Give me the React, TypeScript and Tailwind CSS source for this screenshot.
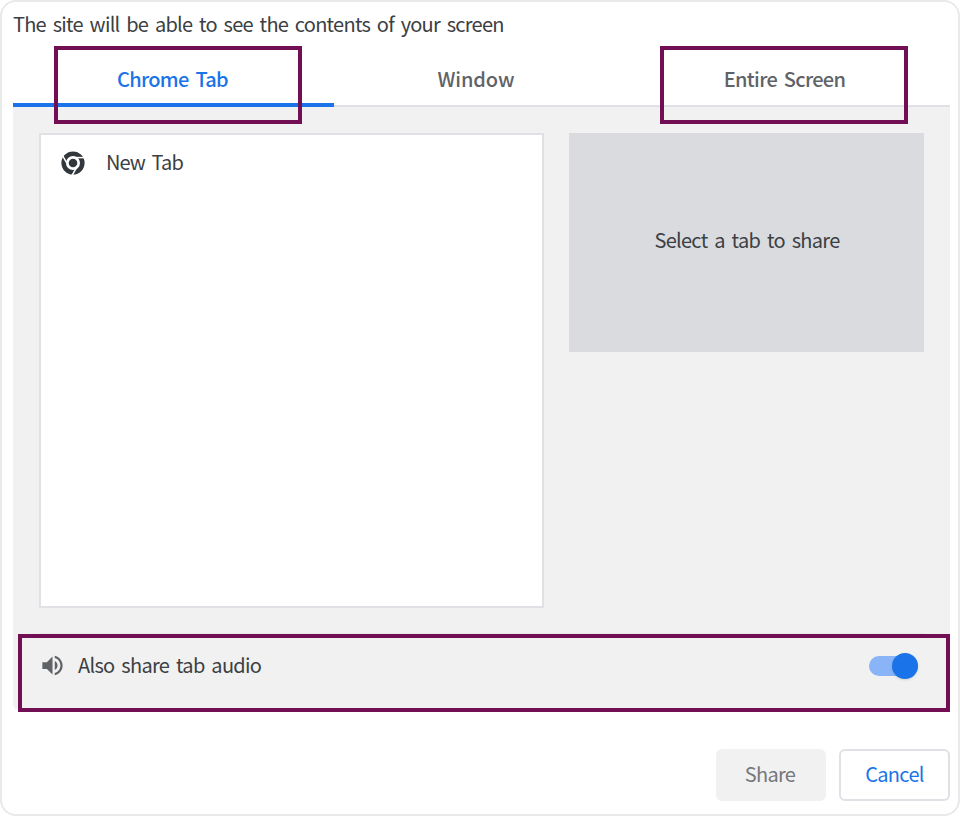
import React from "react";

function ChromeIcon() {
  return (
    <svg viewBox="0 0 24 24" className="h-6 w-6 shrink-0">
      <circle cx="12" cy="12" r="9.3" fill="none" stroke="#32373b" strokeWidth="4.6" />
      <circle cx="12" cy="12" r="6.2" fill="#fff" />
      <circle cx="12" cy="12" r="4.3" fill="#32373b" />
      <g stroke="#fff" strokeWidth="1.5">
        <path d="M12 6.6H23" />
        <path d="M12 6.6H23" transform="rotate(120 12 12)" />
        <path d="M12 6.6H23" transform="rotate(240 12 12)" />
      </g>
    </svg>
  );
}

function SpeakerIcon() {
  return (
    <svg viewBox="0 0 24 24" className="h-[27px] w-[27px] shrink-0" fill="#5f6368">
      <path d="M3 9v6h4l5 5V4L7 9H3zm13.5 3c0-1.77-1.02-3.29-2.5-4.03v8.05c1.48-.73 2.5-2.25 2.5-4.02zM14 3.23v2.06c2.89.86 5 3.54 5 6.71s-2.11 5.85-5 6.71v2.06c4.01-.91 7-4.49 7-8.77s-2.99-7.86-7-8.77z" />
    </svg>
  );
}

function Highlight({ className }: { className: string }) {
  return <div className={`pointer-events-none absolute border-4 border-[#720e54] ${className}`} />;
}

export default function App() {
  return (
    <div className="relative flex h-[816px] w-[960px] flex-col rounded-2xl border-2 border-[#e9e9e9] bg-white pr-2 pl-[11px] font-['Noto_Sans_CJK_KR',sans-serif] text-[20px] leading-[30px] tracking-[-0.7px] text-[#3c4043] [word-spacing:3px]">
      <h1 className="mt-[7px] h-[30px] whitespace-nowrap tracking-[-0.75px]"><span>The site will be able to see the contents of your screen</span></h1>

      <div className="mt-[5px] grid h-[63px] grid-cols-[321px_286px_330px] text-center font-medium text-[#5f6368]">
        <div className="border-b-4 border-[#1a73e8] pt-[20px] pr-[2px] text-[#1a73e8]"><span>Chrome Tab</span></div>
        <div className="border-b-2 border-[#e0e1e6] pt-[20px] pr-[2px] tracking-[-0.1px]"><span>Window</span></div>
        <div className="border-b-2 border-[#e0e1e6] pt-[20px] pr-px"><span>Entire Screen</span></div>
      </div>

      <main className="flex h-[603px] flex-col rounded-b-md bg-[#f1f1f1] px-[26px] pt-[26px]">
        <div className="flex items-start justify-between">
          <div className="h-[475px] w-[505px] border-2 border-[#dfe1e5] bg-white pt-[13px] pl-5">
            <div className="flex h-[30px] items-center gap-[21px]">
              <ChromeIcon />
              <span className="pb-[2px] tracking-[-0.9px]">New Tab</span>
            </div>
          </div>
          <div className="flex h-[219px] w-[355px] items-center justify-center bg-[#dadbdf]">
            <span className="pb-[5px] pl-px">Select a tab to share</span>
          </div>
        </div>
        <div className="mt-[25px] flex h-[64px] items-center border-t border-[#e8e8ea]">
          <SpeakerIcon />
          <span className="ml-3 pb-px">Also share tab audio</span>
          <div className="mr-[6px] ml-auto flex h-5 w-[49px] items-center justify-end rounded-full bg-[#8ab4f8]">
            <div className="h-[26px] w-[26px] shrink-0 rounded-full bg-[#1a73e8] shadow-sm" />
          </div>
        </div>
      </main>

      <footer className="mt-[39px] flex justify-end gap-[13px]">
        <button className="h-[52px] w-[110px] rounded-md bg-[#f1f1f1] pr-[2px] pb-[3px] text-[#77787b]"><span>Share</span></button>
        <button className="h-[52px] w-[111px] rounded-md border-2 border-[#e0e1e6] pb-[3px] text-[#1a73e8]"><span>Cancel</span></button>
      </footer>

      <Highlight className="top-[44px] left-[52px] h-[78px] w-[248px]" />
      <Highlight className="top-[44px] left-[658px] h-[78px] w-[248px]" />
      <Highlight className="top-[632px] left-4 h-[78px] w-[932px]" />
    </div>
  );
}
